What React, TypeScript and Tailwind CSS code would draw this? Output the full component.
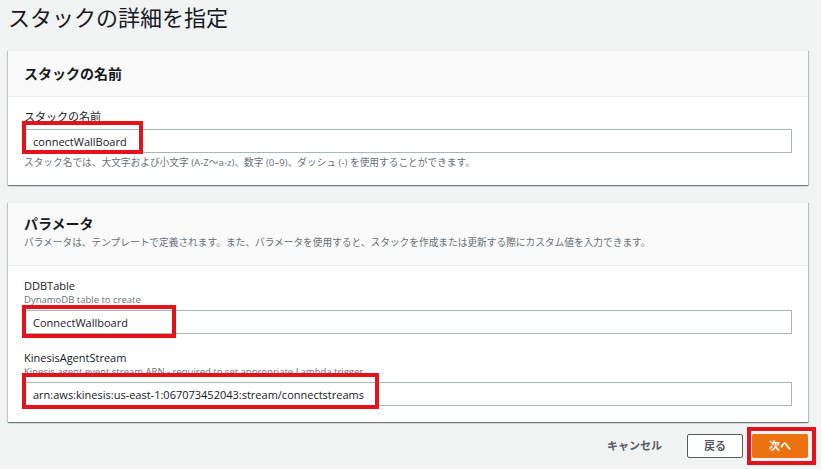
import type { ReactNode } from 'react'

const font = "font-['Open_Sans','Noto_Sans_CJK_JP',sans-serif]"

function Card({ children }: { children: ReactNode }) {
  return (
    <div className="w-[800px] bg-white shadow-[0_1px_1px_0_rgba(0,28,36,0.35),1px_1px_1px_0_rgba(0,28,36,0.2),-1px_1px_1px_0_rgba(0,28,36,0.15)] border-t border-[#eaeded]">
      {children}
    </div>
  )
}

function Input({ value }: { value: string }) {
  return (
    <div className="h-[24px] border border-[#aab7b8] bg-white flex items-center pl-[8px] text-[11px] text-[#16191f] leading-none">
      {value}
    </div>
  )
}

// annotation boxes drawn over the screenshot
const marks = [
  { left: 22, top: 121, width: 121, height: 33 },
  { left: 22, top: 305, width: 154, height: 33 },
  { left: 22, top: 373, width: 357, height: 36 },
  { left: 747, top: 427, width: 69, height: 38 },
]

export default function App() {
  return (
    <div className={`relative min-h-[469px] bg-[#f2f3f3] pl-[8px] text-[#16191f] ${font}`}>
      <div className="h-[50px] pt-[1px]">
        <h1 className="text-[22px] leading-[32px] font-normal">スタックの詳細を指定</h1>
      </div>

      <Card>
        <div className="h-[46px] bg-[#fafafa] border-b border-[#eaeded] flex items-center px-[16px]">
          <h2 className="text-[14px] font-bold leading-none">スタックの名前</h2>
        </div>
        <div className="px-[16px] pt-[12px] pb-[15px]">
          <div className="text-[11px] leading-[16px]">スタックの名前</div>
          <div className="mt-[4px]">
            <Input value="connectWallBoard" />
          </div>
          <div className="mt-[3px] text-[9.7px] leading-[14px] text-[#687078]">
            スタック名では、大文字および小文字 (A-Z〜a-z)、数字 (0–9)、ダッシュ (-) を使用することができます。
          </div>
        </div>
      </Card>

      <div className="h-[17px]" />

      <Card>
        <div className="bg-[#fafafa] border-b border-[#eaeded] px-[16px] pt-[11px] pb-[15px]">
          <h2 className="text-[14px] font-bold leading-[20px]">パラメータ</h2>
          <p className="mt-[2px] text-[9.7px] leading-[14px] text-[#687078]">
            パラメータは、テンプレートで定義されます。また、パラメータを使用すると、スタックを作成または更新する際にカスタム値を入力できます。
          </p>
        </div>
        <div className="px-[16px] pt-[12px] pb-[16px]">
          <div className="text-[11px] leading-[16px]">DDBTable</div>
          <div className="text-[9.5px] leading-[12px] text-[#687078]">DynamoDB table to create</div>
          <div className="mt-[4px]">
            <Input value="ConnectWallboard" />
          </div>
          <div className="mt-[16px] text-[11px] leading-[16px]">KinesisAgentStream</div>
          <div className="text-[9.5px] leading-[12px] text-[#687078]">
            Kinesis agent event stream ARN - required to set appropriate Lambda trigger
          </div>
          <div className="mt-[4px]">
            <Input value="arn:aws:kinesis:us-east-1:067073452043:stream/connectstreams" />
          </div>
        </div>
      </Card>

      <div className="w-[800px] flex justify-end items-center gap-[9px] pt-[12px]">
        <button className="h-[24px] px-[4px] mr-[12px] text-[11px] font-bold text-[#545b64]">キャンセル</button>
        <button className="h-[24px] w-[56px] border border-[#545b64] bg-white text-[11px] font-bold text-[#545b64] rounded-[2px]">
          戻る
        </button>
        <button className="h-[24px] w-[56px] bg-[#ec7211] text-[11px] font-bold text-white rounded-[2px]">次へ</button>
      </div>

      {marks.map((m, i) => (
        <div
          key={i}
          className="absolute border-[4px] border-[#e3121b] pointer-events-none"
          style={{ left: m.left, top: m.top, width: m.width, height: m.height }}
        />
      ))}
    </div>
  )
}
